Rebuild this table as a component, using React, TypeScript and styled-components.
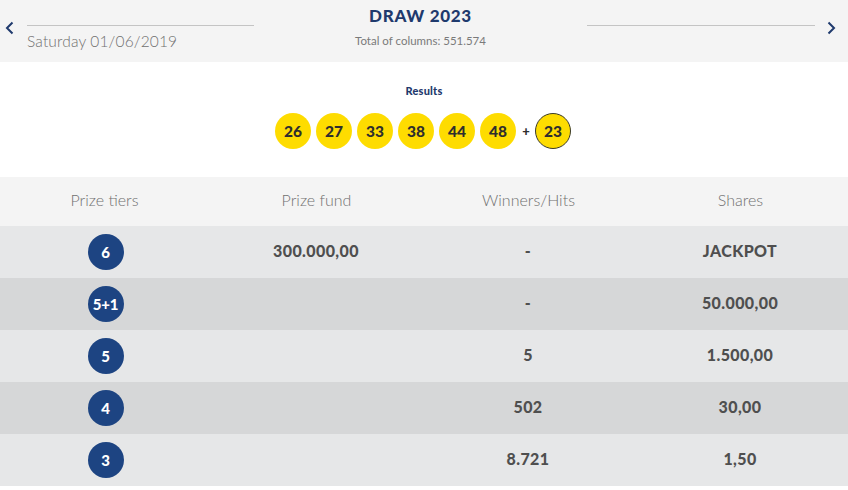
import React, { ReactElement } from 'react';
import styled, { createGlobalStyle } from 'styled-components';

const GlobalStyle = createGlobalStyle`
  html, body {
    margin: 0;
    padding: 0;
    background: #fff;
  }
  body {
    font-family: 'Lato', 'Open Sans', sans-serif;
  }
`;

const Page = styled.div`
  width: 848px;
  overflow: hidden;
`;

const Header = styled.header`
  display: grid;
  grid-template-columns: 27px 227px 1fr 228px 33px;
  height: 62px;
  background-color: #f4f4f4;
`;

const ArrowCell = styled.div<{ align: 'left' | 'right' }>`
  display: flex;
  justify-content: ${({ align }) => (align === 'left' ? 'flex-start' : 'flex-end')};
  padding: 21px ${({ align }) => (align === 'left' ? '0 0 5px' : '12px 0 0')};
`;

const SideBlock = styled.div`
  padding-top: 25px;
`;

const Line = styled.div`
  height: 1px;
  background-color: #c4c4c4;
`;

const DateText = styled.div`
  margin-top: 6px;
  font-size: 15.5px;
  line-height: 18px;
  font-weight: 300;
  color: #707070;
  letter-spacing: 0.15px;
`;

const Center = styled.div`
  display: flex;
  flex-direction: column;
  align-items: center;
  padding-top: 6px;
`;

const DrawTitle = styled.div`
  font-size: 17px;
  line-height: 20px;
  font-weight: 900;
  color: #1f3a6d;
  letter-spacing: 0.7px;
`;

const Columns = styled.div`
  margin-top: 8px;
  font-size: 11.5px;
  line-height: 13px;
  color: #7a7a7a;
`;

const ResultsSection = styled.section`
  height: 115px;
  display: flex;
  flex-direction: column;
  align-items: center;
  padding-top: 22px;
  box-sizing: border-box;
`;

const ResultsTitle = styled.div`
  font-size: 11px;
  line-height: 14px;
  font-weight: 900;
  color: #1f3a6d;
  letter-spacing: 0.2px;
`;

const Balls = styled.div`
  display: flex;
  align-items: center;
  gap: 5px;
  margin-top: 15px;
  margin-right: 2px;
`;

const Ball = styled.div<{ bonus?: boolean }>`
  width: 36px;
  height: 36px;
  border-radius: 50%;
  box-sizing: border-box;
  background-color: #fedc00;
  border: ${({ bonus }) => (bonus ? '1px solid #3a3a2a' : 'none')};
  display: flex;
  align-items: center;
  justify-content: center;
  font-size: 15.5px;
  font-weight: 900;
  color: #2e2e2e;
`;

const Plus = styled.span`
  width: 14px;
  text-align: center;
  font-size: 13px;
  font-weight: 900;
  color: #2e2e2e;
  margin: 0 -3px 0 -2px;
`;

const Table = styled.div`
  display: flex;
  flex-direction: column;
`;

const Row = styled.div<{ shade: 'head' | 'light' | 'dark' }>`
  display: grid;
  grid-template-columns: repeat(4, 1fr);
  align-items: center;
  height: ${({ shade }) => (shade === 'head' ? '49px' : '52px')};
  background-color: ${({ shade }) =>
    shade === 'head' ? '#f4f4f4' : shade === 'light' ? '#e6e7e8' : '#d6d7d8'};
`;

const HeadCell = styled.div`
  text-align: center;
  font-size: 16px;
  font-weight: 300;
  color: #707070;
  padding: 0 3px 4px 0;
`;

const Cell = styled.div`
  text-align: center;
  font-size: 16px;
  font-weight: 900;
  color: #4f4f4f;
  letter-spacing: 0.4px;
  padding: 0 4px 3px 0;
`;

const TierWrap = styled.div`
  display: flex;
  justify-content: center;
  padding-right: 1px;
`;

const Tier = styled.div`
  width: 36px;
  height: 36px;
  border-radius: 50%;
  background-color: #1d4482;
  color: #fff;
  display: flex;
  align-items: center;
  justify-content: center;
  font-size: 15px;
  font-weight: 900;
  letter-spacing: -0.2px;
`;

const Chevron = ({ dir }: { dir: 'left' | 'right' }): ReactElement => (
  <svg width="9" height="14" viewBox="0 0 9 14">
    <path
      d={dir === 'left' ? 'M7.5 1.5 L2 7 L7.5 12.5' : 'M1.5 1.5 L7 7 L1.5 12.5'}
      fill="none"
      stroke="#1f3a6d"
      strokeWidth="2"
    />
  </svg>
);

const rows = [
  { tier: '6', fund: '300.000,00', winners: '-', share: 'JACKPOT' },
  { tier: '5+1', fund: '', winners: '-', share: '50.000,00' },
  { tier: '5', fund: '', winners: '5', share: '1.500,00' },
  { tier: '4', fund: '', winners: '502', share: '30,00' },
  { tier: '3', fund: '', winners: '8.721', share: '1,50' },
];

const numbers = ['26', '27', '33', '38', '44', '48'];

const App = (): ReactElement => (
  <Page>
    <GlobalStyle />
    <Header>
      <ArrowCell align="left">
        <Chevron dir="left" />
      </ArrowCell>
      <SideBlock>
        <Line />
        <DateText>Saturday 01/06/2019</DateText>
      </SideBlock>
      <Center>
        <DrawTitle>DRAW 2023</DrawTitle>
        <Columns>Total of columns: 551.574</Columns>
      </Center>
      <SideBlock>
        <Line />
      </SideBlock>
      <ArrowCell align="right">
        <Chevron dir="right" />
      </ArrowCell>
    </Header>
    <ResultsSection>
      <ResultsTitle>Results</ResultsTitle>
      <Balls>
        {numbers.map((n) => (
          <Ball key={n}>{n}</Ball>
        ))}
        <Plus>+</Plus>
        <Ball bonus>23</Ball>
      </Balls>
    </ResultsSection>
    <Table>
      <Row shade="head">
        <HeadCell>Prize tiers</HeadCell>
        <HeadCell>Prize fund</HeadCell>
        <HeadCell>Winners/Hits</HeadCell>
        <HeadCell>Shares</HeadCell>
      </Row>
      {rows.map((r, i) => (
        <Row key={r.tier} shade={i % 2 === 0 ? 'light' : 'dark'}>
          <TierWrap>
            <Tier>{r.tier}</Tier>
          </TierWrap>
          <Cell>{r.fund}</Cell>
          <Cell>{r.winners}</Cell>
          <Cell>{r.share}</Cell>
        </Row>
      ))}
    </Table>
  </Page>
);

export default App;
